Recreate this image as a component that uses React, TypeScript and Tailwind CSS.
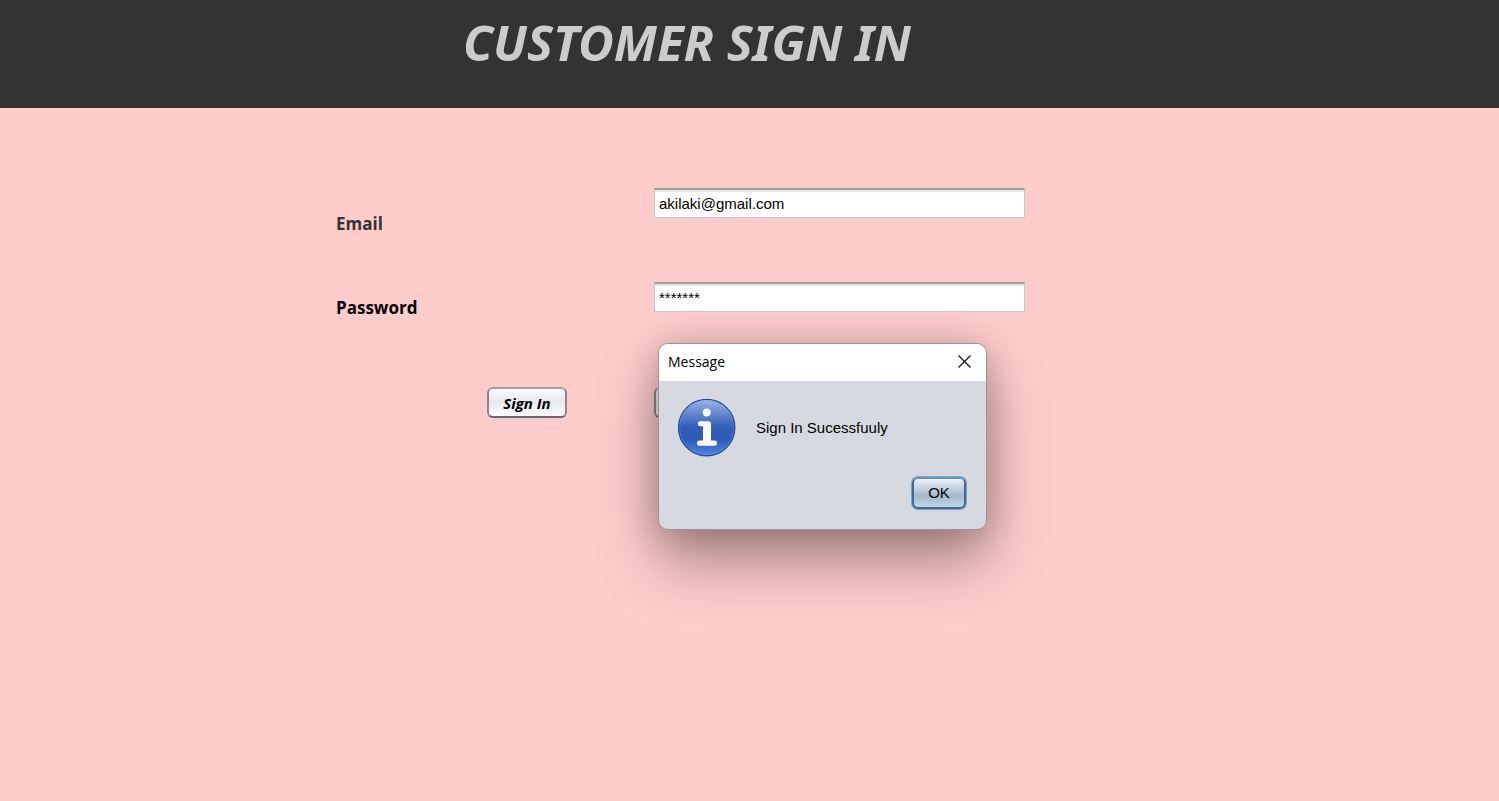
import { useState } from 'react';

const field =
  'h-[30px] w-full border border-t-2 border-[#c8c8cb] border-t-[#a39da0] bg-white px-1 pt-0 font-["Liberation_Sans",sans-serif] text-[15px] leading-5 text-black shadow-[inset_0_2px_1px_#e6e6e6] outline-none';

const formButton =
  'h-[31px] w-20 rounded-md border-2 border-[#8f8388] border-t-[#a79da2] border-b-[#6d6670] bg-linear-to-b from-[#fafbfc] via-[#e5e9f0] to-[#fbfdff] font-["Open_Sans",sans-serif] text-[15px] leading-5 font-bold text-black italic';

function InfoIcon() {
  return (
    <svg viewBox="0 0 58 58" className="size-[58px]" aria-hidden="true">
      <defs>
        <linearGradient id="disc" x1="0" y1="0" x2="0" y2="1">
          <stop offset="0" stopColor="#9db3e3" />
          <stop offset="0.22" stopColor="#6d8dd0" />
          <stop offset="0.48" stopColor="#345fb8" />
          <stop offset="0.7" stopColor="#2b59b5" />
          <stop offset="1" stopColor="#5585e2" />
        </linearGradient>
        <linearGradient id="rim" x1="0" y1="0" x2="0" y2="1">
          <stop offset="0" stopColor="#8fa9df" />
          <stop offset="0.5" stopColor="#4a74c8" />
          <stop offset="1" stopColor="#5b89e0" />
        </linearGradient>
      </defs>
      <circle cx="28.7" cy="28.6" r="28.2" fill="url(#disc)" stroke="#214a9c" strokeWidth="1.2" />
      <circle cx="28.7" cy="28.6" r="27" fill="none" stroke="url(#rim)" strokeWidth="1" />
      <circle cx="28.7" cy="13.6" r="4" fill="#fbfcff" />
      <path
        d="M22.2 22.3H30.2Q33 22.3 33 25V41.5H36.6Q39.1 41.5 39.1 44.1T36.6 46.7H21.4Q18.9 46.7 18.9 44.1T21.4 41.5H25V27.2H22.2Q19.8 27.2 19.8 24.7T22.2 22.3Z"
        fill="#fbfcff"
      />
    </svg>
  );
}

function MessageDialog({ onClose }: { onClose: () => void }) {
  return (
    <div
      role="dialog"
      aria-labelledby="dialog-title"
      className="absolute top-[235px] left-[322px] w-[329px] overflow-hidden rounded-[10px] border border-[#a98f92] bg-[#d6d9e0] shadow-[0_32px_60px_rgba(0,0,0,0.34),0_2px_36px_rgba(0,0,0,0.2)]"
    >
      <div className="flex h-[37px] items-center justify-between bg-white pr-[15px] pb-0.5 pl-[9px]">
        <h2 id="dialog-title" className='font-["Open_Sans",sans-serif] text-[14px] leading-5 text-black'>
          Message
        </h2>
        <button type="button" aria-label="Close" onClick={onClose}>
          <svg viewBox="0 0 13 13" className="size-[13px]" fill="none" stroke="#111" strokeWidth="1.2">
            <path d="M0.5 0.5L12.5 12.5M12.5 0.5L0.5 12.5" />
          </svg>
        </button>
      </div>
      <div className="flex items-center gap-5 px-[19px] pt-[18px] font-['Liberation_Sans',sans-serif] text-[15px] leading-5 text-black">
        <InfoIcon />
        <p>Sign In Sucessfuuly</p>
      </div>
      <div className="flex justify-end px-5 pt-5 pb-5">
        <button
          type="button"
          onClick={onClose}
          className="h-8 w-[54px] rounded-md border-2 border-[#44688c] border-t-[#6c93b8] bg-linear-to-b from-[#eef2f7] via-[#a5b8cc] via-60% to-[#c3d7e8] font-['Liberation_Sans',sans-serif] text-[15px] leading-5 text-black shadow-[0_0_0_1px_#79a5cf]"
        >
          OK
        </button>
      </div>
    </div>
  );
}

export default function App() {
  const [open, setOpen] = useState(true);
  const [email, setEmail] = useState('akilaki@gmail.com');
  const [password, setPassword] = useState('*******');

  return (
    <div className="min-h-screen bg-[#ffcccc]">
      <header className="flex h-[108px] justify-center bg-[#333333] pt-2.5 pr-[125px]">
        <h1 className='font-["Noto_Sans",sans-serif] text-[49px] leading-16 font-bold whitespace-nowrap text-[#cccccc] italic'>
          CUSTOMER SIGN IN
        </h1>
      </header>
      <main className="flex justify-center pr-[138px]">
        <form className="relative w-full max-w-[689px] pt-20" onSubmit={(e) => e.preventDefault()}>
          <div className="grid grid-cols-[318px_1fr] items-start">
            <label
              htmlFor="email"
              className='pt-6 font-["Open_Sans",sans-serif] text-[17px] leading-6 font-bold text-[#333333]'
            >
              Email
            </label>
            <input id="email" type="email" className={field} value={email} onChange={(e) => setEmail(e.target.value)} />
          </div>
          <div className="mt-[46px] grid grid-cols-[318px_1fr] items-start">
            <label
              htmlFor="password"
              className='pt-3.5 font-["Open_Sans",sans-serif] text-[17px] leading-6 font-bold text-black'
            >
              Password
            </label>
            <input
              id="password"
              type="text"
              className={field}
              value={password}
              onChange={(e) => setPassword(e.target.value)}
            />
          </div>
          <div className="mt-[67px] flex gap-[87px] pl-[151px]">
            <button type="submit" className={formButton} onClick={() => setOpen(true)}>
              Sign In
            </button>
            <button type="reset" className={formButton}>
              Clear
            </button>
          </div>
          {open && <MessageDialog onClose={() => setOpen(false)} />}
        </form>
      </main>
    </div>
  );
}
